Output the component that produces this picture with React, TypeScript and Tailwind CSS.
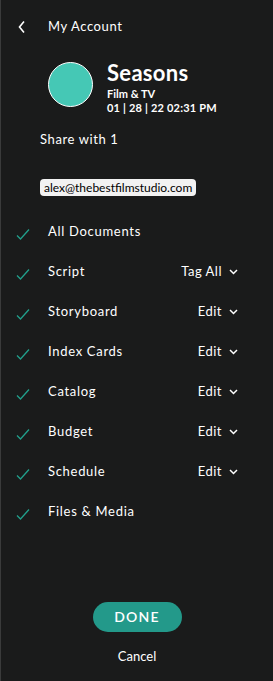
import React from "react";

interface DocRow {
  label: string;
  action?: string;
}

const rows: DocRow[] = [
  { label: "All Documents" },
  { label: "Script", action: "Tag All" },
  { label: "Storyboard", action: "Edit" },
  { label: "Index Cards", action: "Edit" },
  { label: "Catalog", action: "Edit" },
  { label: "Budget", action: "Edit" },
  { label: "Schedule", action: "Edit" },
  { label: "Files & Media" },
];

function Check() {
  return (
    <svg width="14" height="12" viewBox="0 0 14 12" fill="none">
      <path d="M1 7.5 L4.5 11 L13 1.5" stroke="#21a08c" strokeWidth="1.3" />
    </svg>
  );
}

function Chevron() {
  return (
    <svg width="9" height="6" viewBox="0 0 9 6" fill="none">
      <path d="M1 1 L4.5 4.5 L8 1" stroke="#ffffff" strokeWidth="1.5" />
    </svg>
  );
}

function Row({ label, action }: DocRow) {
  return (
    <div className="flex items-center h-[40px] pl-[15px] pr-[35px]">
      <div className="w-[32px] pt-[3px]">
        <Check />
      </div>
      <span className="flex-1 text-[13px] font-normal tracking-[0.7px] text-white">
        {label}
      </span>
      {action && (
        <span className="flex items-center gap-[7px] text-[13px] font-normal tracking-[0.5px] text-white">
          {action}
          <Chevron />
        </span>
      )}
    </div>
  );
}

export default function App() {
  return (
    <div
      className="w-[273px] h-[681px] bg-[#1a1b1b] border-l border-[#3a3b3b] flex flex-col text-white"
      style={{ fontFamily: "Lato, 'Open Sans', sans-serif" }}
    >
      <div className="flex items-center h-[26px] mt-[14px] pl-[16px]">
        <svg width="10" height="14" viewBox="0 0 10 14" fill="none">
          <path d="M7 1.5 L2.5 7 L7 12.5" stroke="#ffffff" strokeWidth="1.6" />
        </svg>
        <span className="ml-[21px] text-[13px] font-normal tracking-[0.6px]">
          My Account
        </span>
      </div>

      <div className="flex items-start mt-[22px] pl-[47px]">
        <div className="w-[45px] h-[45px] rounded-full bg-[#45c8b5] border-[1.5px] border-white" />
        <div className="ml-[14px] flex flex-col">
          <span className="text-[22px] font-bold leading-[22px] tracking-[0.3px]">
            Seasons
          </span>
          <span className="text-[11px] font-bold leading-[14px] mt-[3px]">
            Film &amp; TV
          </span>
          <span className="text-[11px] font-bold leading-[14px] tracking-[0.2px]">
            01 | 28 | 22 02:31 PM
          </span>
        </div>
      </div>

      <div className="pl-[39px] mt-[16px] text-[13px] font-normal tracking-[0.6px] leading-[16px]">
        Share with 1
      </div>

      <div className="flex pl-[39px] mt-[32px]">
        <span className="bg-[#f2f2f2] text-black rounded-[4px] px-[4px] text-[12px] font-normal leading-[17px]">
          alex@thebestfilmstudio.com
        </span>
      </div>

      <div className="mt-[16px] flex flex-col">
        {rows.map((r) => (
          <Row key={r.label} label={r.label} action={r.action} />
        ))}
      </div>

      <div className="flex flex-col items-center mt-auto mb-[15px]">
        <button className="w-[89px] h-[30px] rounded-full bg-[#23998a] text-[14px] font-semibold tracking-[1.2px] text-white">
          DONE
        </button>
        <span className="mt-[15px] text-[13px] font-normal text-white">
          Cancel
        </span>
      </div>
    </div>
  );
}
